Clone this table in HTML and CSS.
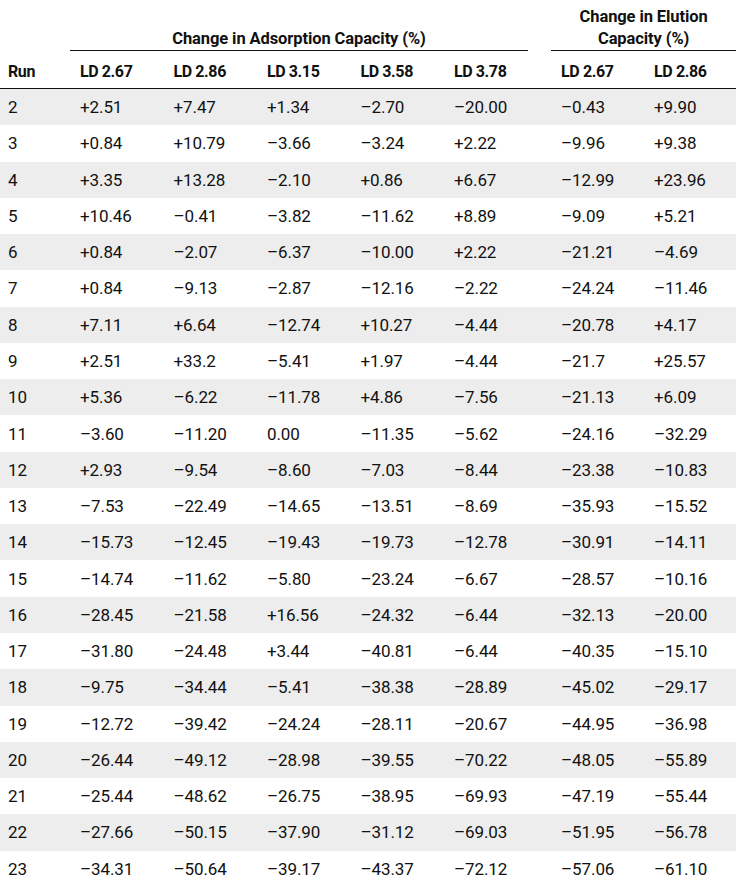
FILE: index.html
```html
<!DOCTYPE html>
<html lang="en">
<head>
<meta charset="utf-8">
<title>Change in Capacity</title>
<link rel="stylesheet" href="styles.css">
</head>
<body>
<table class="data">
  <colgroup>
    <col class="c-run">
    <col class="c-val"><col class="c-val"><col class="c-val"><col class="c-val"><col class="c-val">
    <col class="c-gap">
    <col class="c-val2"><col class="c-val3">
  </colgroup>
  <thead>
    <tr class="group">
      <th></th>
      <th colspan="5" class="grp grp-ads"><div class="grp-label">Change in Adsorption Capacity (%)</div></th>
      <th></th>
      <th colspan="2" class="grp grp-elu"><div class="grp-label">Change in Elution<br>Capacity (%)</div></th>
    </tr>
    <tr class="cols">
      <th class="run">Run</th>
      <th>LD 2.67</th>
      <th>LD 2.86</th>
      <th>LD 3.15</th>
      <th>LD 3.58</th>
      <th>LD 3.78</th>
      <th class="gap"></th>
      <th>LD 2.67</th>
      <th>LD 2.86</th>
    </tr>
  </thead>
  <tbody>
    <tr><td class="run">2</td><td>+2.51</td><td>+7.47</td><td>+1.34</td><td>–2.70</td><td>–20.00</td><td></td><td>–0.43</td><td>+9.90</td></tr>
    <tr><td class="run">3</td><td>+0.84</td><td>+10.79</td><td>–3.66</td><td>–3.24</td><td>+2.22</td><td></td><td>–9.96</td><td>+9.38</td></tr>
    <tr><td class="run">4</td><td>+3.35</td><td>+13.28</td><td>–2.10</td><td>+0.86</td><td>+6.67</td><td></td><td>–12.99</td><td>+23.96</td></tr>
    <tr><td class="run">5</td><td>+10.46</td><td>–0.41</td><td>–3.82</td><td>–11.62</td><td>+8.89</td><td></td><td>–9.09</td><td>+5.21</td></tr>
    <tr><td class="run">6</td><td>+0.84</td><td>–2.07</td><td>–6.37</td><td>–10.00</td><td>+2.22</td><td></td><td>–21.21</td><td>–4.69</td></tr>
    <tr><td class="run">7</td><td>+0.84</td><td>–9.13</td><td>–2.87</td><td>–12.16</td><td>–2.22</td><td></td><td>–24.24</td><td>–11.46</td></tr>
    <tr><td class="run">8</td><td>+7.11</td><td>+6.64</td><td>–12.74</td><td>+10.27</td><td>–4.44</td><td></td><td>–20.78</td><td>+4.17</td></tr>
    <tr><td class="run">9</td><td>+2.51</td><td>+33.2</td><td>–5.41</td><td>+1.97</td><td>–4.44</td><td></td><td>–21.7</td><td>+25.57</td></tr>
    <tr><td class="run">10</td><td>+5.36</td><td>–6.22</td><td>–11.78</td><td>+4.86</td><td>–7.56</td><td></td><td>–21.13</td><td>+6.09</td></tr>
    <tr><td class="run">11</td><td>–3.60</td><td>–11.20</td><td>0.00</td><td>–11.35</td><td>–5.62</td><td></td><td>–24.16</td><td>–32.29</td></tr>
    <tr><td class="run">12</td><td>+2.93</td><td>–9.54</td><td>–8.60</td><td>–7.03</td><td>–8.44</td><td></td><td>–23.38</td><td>–10.83</td></tr>
    <tr><td class="run">13</td><td>–7.53</td><td>–22.49</td><td>–14.65</td><td>–13.51</td><td>–8.69</td><td></td><td>–35.93</td><td>–15.52</td></tr>
    <tr><td class="run">14</td><td>–15.73</td><td>–12.45</td><td>–19.43</td><td>–19.73</td><td>–12.78</td><td></td><td>–30.91</td><td>–14.11</td></tr>
    <tr><td class="run">15</td><td>–14.74</td><td>–11.62</td><td>–5.80</td><td>–23.24</td><td>–6.67</td><td></td><td>–28.57</td><td>–10.16</td></tr>
    <tr><td class="run">16</td><td>–28.45</td><td>–21.58</td><td>+16.56</td><td>–24.32</td><td>–6.44</td><td></td><td>–32.13</td><td>–20.00</td></tr>
    <tr><td class="run">17</td><td>–31.80</td><td>–24.48</td><td>+3.44</td><td>–40.81</td><td>–6.44</td><td></td><td>–40.35</td><td>–15.10</td></tr>
    <tr><td class="run">18</td><td>–9.75</td><td>–34.44</td><td>–5.41</td><td>–38.38</td><td>–28.89</td><td></td><td>–45.02</td><td>–29.17</td></tr>
    <tr><td class="run">19</td><td>–12.72</td><td>–39.42</td><td>–24.24</td><td>–28.11</td><td>–20.67</td><td></td><td>–44.95</td><td>–36.98</td></tr>
    <tr><td class="run">20</td><td>–26.44</td><td>–49.12</td><td>–28.98</td><td>–39.55</td><td>–70.22</td><td></td><td>–48.05</td><td>–55.89</td></tr>
    <tr><td class="run">21</td><td>–25.44</td><td>–48.62</td><td>–26.75</td><td>–38.95</td><td>–69.93</td><td></td><td>–47.19</td><td>–55.44</td></tr>
    <tr><td class="run">22</td><td>–27.66</td><td>–50.15</td><td>–37.90</td><td>–31.12</td><td>–69.03</td><td></td><td>–51.95</td><td>–56.78</td></tr>
    <tr><td class="run">23</td><td>–34.31</td><td>–50.64</td><td>–39.17</td><td>–43.37</td><td>–72.12</td><td></td><td>–57.06</td><td>–61.10</td></tr>
  </tbody>
</table>
</body>
</html>
```

FILE: styles.css
```css
html, body {
  margin: 0;
  padding: 0;
  background: #ffffff;
}

body {
  font-family: "Roboto", "Liberation Sans", sans-serif;
  font-size: 17px;
  color: #111111;
}

.data {
  width: 736px;
  table-layout: fixed;
  border-collapse: collapse;
  border-spacing: 0;
}

.c-run { width: 70px; }
.c-val { width: 93.5px; }
.c-gap { width: 13.5px; }
.c-val2 { width: 93px; }
.c-val3 { width: 92px; }

.data th {
  font-weight: bold;
  text-align: left;
  padding: 0 0 0 10px;
  font-size: 16px;
  letter-spacing: -0.4px;
}

.data .group th {
  height: 51px;
  vertical-align: bottom;
  padding: 0;
}

.data th.grp {
  text-align: center;
  font-size: 16.5px;
  letter-spacing: -0.1px;
}

.grp-label {
  line-height: 22px;
  border-bottom: 1.5px solid #111111;
  padding-bottom: 0;
}

.grp-ads .grp-label {
  margin-right: 9.5px;
}

.data .cols th {
  height: 31px;
  vertical-align: bottom;
  line-height: 20px;
  padding-bottom: 6px;
  border-bottom: 1.5px solid #111111;
}

.data .cols th.run {
  padding-left: 8px;
}

.data td {
  height: 36.27px;
  padding: 0 0 0 10px;
  line-height: 20px;
  vertical-align: middle;
  letter-spacing: -0.1px;
  white-space: nowrap;
}

.data td.run {
  padding-left: 8px;
}

.data tbody tr:nth-child(odd) td {
  background: #ededed;
}
```
